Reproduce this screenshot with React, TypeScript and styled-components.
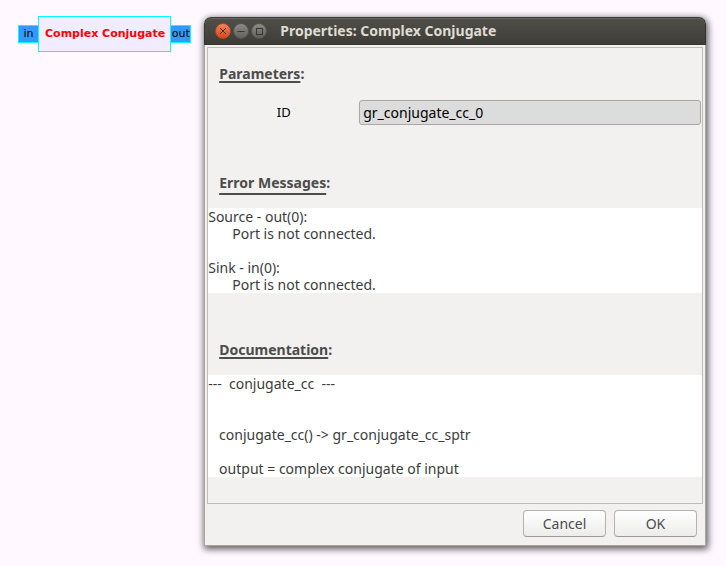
import React from "react";
import styled, { createGlobalStyle, css } from "styled-components";

const GlobalStyle = createGlobalStyle`
  *, *::before, *::after { box-sizing: border-box; }
  body {
    margin: 0;
    background: #fff8ff;
    color: #3c3c3c;
    font-family: "Noto Sans", "Open Sans", sans-serif;
    font-size: 14px;
    line-height: 17px;
  }
  button, input { font: inherit; }
`;

const Workspace = styled.main`
  display: flex;
  align-items: flex-start;
  gap: 13px;
  min-height: 100vh;
  padding: 16px 20px 20px 18px;
`;

const Block = styled.div`
  display: flex;
  flex: none;
  align-items: center;
  color: #000;
  font-family: "DejaVu Sans", sans-serif;
  font-size: 11px;
  line-height: 16px;
`;

const Port = styled.span<{ $side: "in" | "out" }>`
  display: flex;
  justify-content: center;
  width: 20px;
  height: 18px;
  background: #3399ff;
  border: 1px solid #00ffff;
  ${({ $side }) =>
    $side === "in"
      ? css`
          border-right: 0;
        `
      : css`
          border-left: 0;
        `}
`;

const BlockBody = styled.span`
  height: 36px;
  padding: 9px 5px 0 6px;
  background: #f1ecff;
  border: 1px solid #00ffff;
  color: #ff0000;
  font-weight: bold;
  white-space: nowrap;
`;

const Window = styled.section`
  flex: 1;
  min-width: 0;
  margin-top: 1px;
  border-radius: 7px 7px 0 0;
  box-shadow: 1px 2px 7px 1px rgba(0, 0, 0, 0.65);
`;

const TitleBar = styled.header`
  display: flex;
  align-items: center;
  gap: 13px;
  height: 28px;
  padding: 0 12px 0 10px;
  background: linear-gradient(#504f49, #3d3c37);
  border: 1px solid #35342f;
  border-top-color: #3c3b37;
  border-radius: 7px 7px 0 0;
  box-shadow: inset 0 1px #67665e;
`;

const WindowControls = styled.div`
  display: flex;
  gap: 2px;
`;

const ControlButton = styled.button<{ $close?: boolean }>`
  display: flex;
  width: 16px;
  height: 16px;
  padding: 0;
  border: 1px solid ${({ $close }) => ($close ? "#a8492a" : "#55544e")};
  border-radius: 50%;
  background: ${({ $close }) =>
    $close
      ? "linear-gradient(#f5835d, #dd4814)"
      : "linear-gradient(#8b8a83, #62615b)"};

  svg {
    width: 14px;
    height: 14px;
    fill: none;
    stroke: #373630;
    stroke-width: 1;
  }
`;

const Title = styled.h1`
  margin: 0;
  color: #dfdbd2;
  font-size: 14px;
  line-height: 20px;
  white-space: nowrap;
`;

const WindowBody = styled.div`
  padding: 2px;
  background: #f2f1f0;
  border: 1px solid #aaa59f;
  border-top: 0;
`;

const Frame = styled.div`
  padding-bottom: 26px;
  border: 1px solid #bfbcb8;
`;

const Section = styled.section`
  display: flex;
  flex-direction: column;

  & + & {
    margin-top: 31px;
  }
`;

const Heading = styled.h2<{ $drop?: number }>`
  margin: 0;
  padding: 17px 11px 16px;
  color: #4c4c4c;
  font-size: 14px;
  line-height: 18px;

  span {
    text-decoration: underline 2px;
    text-decoration-skip-ink: none;
    text-underline-offset: ${({ $drop = 2 }) => $drop}px;
  }
`;

const Field = styled.div`
  display: grid;
  grid-template-columns: 151px 1fr;
  align-items: center;
  margin: 1px 0;
  padding-right: 1px;
`;

const FieldLabel = styled.label`
  color: #000;
  font-size: 13px;
  text-align: center;
`;

const TextField = styled.input`
  width: 100%;
  height: 25px;
  padding: 0 3px;
  background: #dcdcdc;
  border: 1px solid #aaa7a2;
  border-radius: 3px;
  color: #000;
  outline: 0;
`;

const Output = styled.pre`
  margin: 0;
  background: #fff;
  font-family: inherit;
  tab-size: 24px;
`;

const Actions = styled.footer`
  display: flex;
  justify-content: flex-end;
  gap: 8px;
  padding: 6px;
`;

const ActionButton = styled.button`
  width: 83px;
  height: 27px;
  padding: 0;
  border: 1px solid #b5b2ad;
  border-bottom-color: #9d9a95;
  border-radius: 4px;
  background: linear-gradient(#ffffff, #ececeb);
  color: #4c4c4c;
`;

const errorText =
  "Source - out(0):\n\tPort is not connected.\n\nSink - in(0):\n\tPort is not connected.";

const documentation =
  "---  conjugate_cc  ---\n\n\n   conjugate_cc() -> gr_conjugate_cc_sptr\n\n   output = complex conjugate of input";

export default function App() {
  return (
    <>
      <GlobalStyle />
      <Workspace>
        <Block>
          <Port $side="in">in</Port>
          <BlockBody>Complex Conjugate</BlockBody>
          <Port $side="out">out</Port>
        </Block>
        <Window role="dialog" aria-labelledby="window-title">
          <TitleBar>
            <WindowControls>
              <ControlButton $close type="button" aria-label="Close">
                <svg viewBox="0 0 14 14">
                  <path d="M4 4l6 6M10 4l-6 6" />
                </svg>
              </ControlButton>
              <ControlButton type="button" aria-label="Minimize">
                <svg viewBox="0 0 14 14">
                  <path d="M3.5 7.5h7" />
                </svg>
              </ControlButton>
              <ControlButton type="button" aria-label="Maximize">
                <svg viewBox="0 0 14 14">
                  <rect x="4.5" y="4.5" width="6" height="6" />
                </svg>
              </ControlButton>
            </WindowControls>
            <Title id="window-title">Properties: Complex Conjugate</Title>
          </TitleBar>
          <WindowBody>
            <Frame>
              <Section>
                <Heading>
                  <span>Parameters</span>:
                </Heading>
                <Field>
                  <FieldLabel htmlFor="block-id">ID</FieldLabel>
                  <TextField id="block-id" defaultValue="gr_conjugate_cc_0" />
                </Field>
              </Section>
              <Section>
                <Heading $drop={5}>
                  <span>Error Messages</span>:
                </Heading>
                <Output>{errorText}</Output>
              </Section>
              <Section>
                <Heading>
                  <span>Documentation</span>:
                </Heading>
                <Output>{documentation}</Output>
              </Section>
            </Frame>
            <Actions>
              <ActionButton type="button">Cancel</ActionButton>
              <ActionButton type="button">OK</ActionButton>
            </Actions>
          </WindowBody>
        </Window>
      </Workspace>
    </>
  );
}
